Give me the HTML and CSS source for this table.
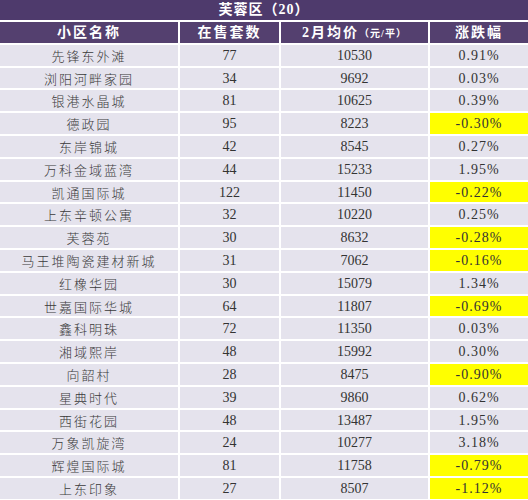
FILE: index.html
```html
<!DOCTYPE html>
<html lang="zh-CN">
<head>
    <meta charset="UTF-8">
    <title>芙蓉区</title>
    <link rel="stylesheet" href="styles.css">
</head>
<body>
    <div class="titre">芙蓉区（20）</div>
    <div class="tableau">
        <div class="th">小区名称</div>
        <div class="th">在售套数</div>
        <div class="th">2月均价<small>（元/平）</small></div>
        <div class="th">涨跌幅</div>

        <div class="nom">先锋东外滩</div><div class="num">77</div><div class="num">10530</div><div class="pct">0.91%</div>
        <div class="nom">浏阳河畔家园</div><div class="num">34</div><div class="num">9692</div><div class="pct">0.03%</div>
        <div class="nom">银港水晶城</div><div class="num">81</div><div class="num">10625</div><div class="pct">0.39%</div>
        <div class="nom">德政园</div><div class="num">95</div><div class="num">8223</div><div class="pct baisse">-0.30%</div>
        <div class="nom">东岸锦城</div><div class="num">42</div><div class="num">8545</div><div class="pct">0.27%</div>
        <div class="nom">万科金域蓝湾</div><div class="num">44</div><div class="num">15233</div><div class="pct">1.95%</div>
        <div class="nom">凯通国际城</div><div class="num">122</div><div class="num">11450</div><div class="pct baisse">-0.22%</div>
        <div class="nom">上东辛顿公寓</div><div class="num">32</div><div class="num">10220</div><div class="pct">0.25%</div>
        <div class="nom">芙蓉苑</div><div class="num">30</div><div class="num">8632</div><div class="pct baisse">-0.28%</div>
        <div class="nom">马王堆陶瓷建材新城</div><div class="num">31</div><div class="num">7062</div><div class="pct baisse">-0.16%</div>
        <div class="nom">红橡华园</div><div class="num">30</div><div class="num">15079</div><div class="pct">1.34%</div>
        <div class="nom">世嘉国际华城</div><div class="num">64</div><div class="num">11807</div><div class="pct baisse">-0.69%</div>
        <div class="nom">鑫科明珠</div><div class="num">72</div><div class="num">11350</div><div class="pct">0.03%</div>
        <div class="nom">湘域熙岸</div><div class="num">48</div><div class="num">15992</div><div class="pct">0.30%</div>
        <div class="nom">向韶村</div><div class="num">28</div><div class="num">8475</div><div class="pct baisse">-0.90%</div>
        <div class="nom">星典时代</div><div class="num">39</div><div class="num">9860</div><div class="pct">0.62%</div>
        <div class="nom">西街花园</div><div class="num">48</div><div class="num">13487</div><div class="pct">1.95%</div>
        <div class="nom">万象凯旋湾</div><div class="num">24</div><div class="num">10277</div><div class="pct">3.18%</div>
        <div class="nom">辉煌国际城</div><div class="num">81</div><div class="num">11758</div><div class="pct baisse">-0.79%</div>
        <div class="nom">上东印象</div><div class="num">27</div><div class="num">8507</div><div class="pct baisse">-1.12%</div>
    </div>
</body>
</html>
```

FILE: styles.css
```css
body {
    margin: 0;
    background: #fff;
    font-family: 'Liberation Serif', 'Noto Sans CJK SC', serif;
    color: #333;
}

.titre {
    background: #4e3a6c;
    color: #fff;
    height: 20px;
    line-height: 20px;
    text-align: center;
    font-size: 14px;
    font-weight: bold;
    letter-spacing: 1px;
    margin-bottom: 2px;
}

.tableau {
    display: grid;
    grid-template-columns: 178px 99px 147px 1fr;
    grid-auto-rows: 20.8px;
    gap: 2px;
}

.tableau > div {
    background: #e5e3ed;
    text-align: center;
    line-height: 21px;
    font-size: 14px;
    white-space: nowrap;
    overflow: hidden;
}

.tableau > .th {
    background: #54406f;
    color: #fff;
    font-weight: bold;
    font-size: 14px;
    letter-spacing: 2px;
    line-height: 21px;
}

.th small {
    font-size: 10px;
    letter-spacing: 1px;
}

.tableau > .nom {
    font-family: 'Noto Sans CJK SC', sans-serif;
    font-size: 13px;
    font-weight: 300;
    letter-spacing: 2px;
    color: #3a3a3a;
}

.tableau > .pct {
    letter-spacing: 1px;
}

.tableau > .baisse {
    background: #ffff00;
}
```
